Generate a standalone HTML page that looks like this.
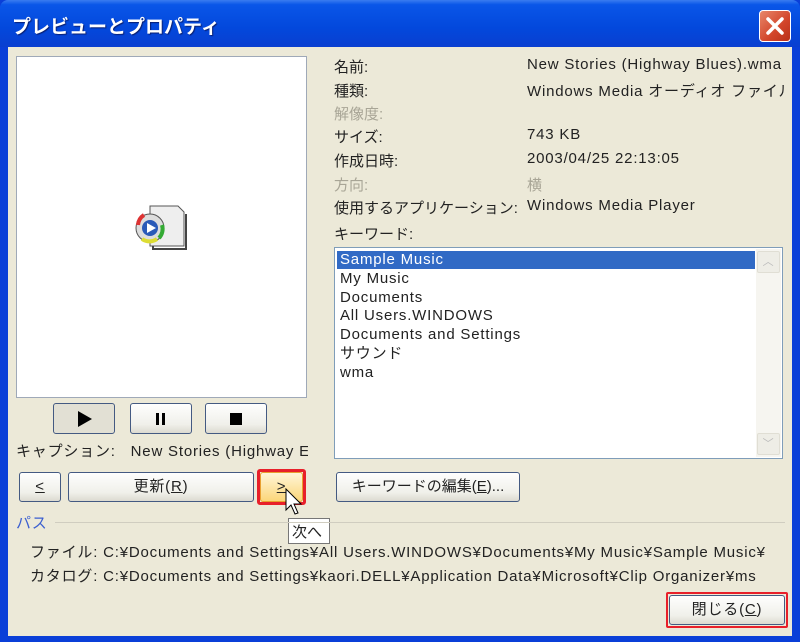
<!DOCTYPE html>
<html><head><meta charset="utf-8"><style>
*{margin:0;padding:0;box-sizing:border-box}
body{width:800px;height:642px;overflow:hidden;background:#0a3fd8;font-family:"Liberation Sans","Noto Sans CJK JP",sans-serif;font-size:15px;color:#222;position:relative;letter-spacing:0.8px}
.a{position:absolute;white-space:nowrap}
#title{left:0;top:0;width:800px;height:47px;background:linear-gradient(#3a7cf0 0,#0a56e8 10%,#0348dc 60%,#0a3fd0 100%);border-radius:8px 8px 0 0}
#tt{left:12px;top:12px;color:#fff;font-weight:bold;font-size:19px;text-shadow:1px 1px 1px #0a1f70;letter-spacing:0}
#close{left:759px;top:10px;width:32px;height:32px;background:linear-gradient(135deg,#e8876a,#d2452a 60%,#b8301a);border:1px solid #fff;border-radius:4px}
#bodyw{left:8px;top:47px;width:784px;height:589px;background:#ece9d8}
.box{background:#fff;border:1px solid #9fa9b8}
.btn{position:absolute;border:1px solid #445a82;border-radius:3px;background:linear-gradient(#fefefe,#f0f0ea 70%,#dcdad0);text-align:center;font-size:15px;line-height:28px}
.g{color:#a8a596}
.l{left:334px;letter-spacing:0}.v{left:527px}
.li{position:absolute;left:5px;font-size:15px;line-height:18px;height:18px}
</style></head><body>
<div class="a" id="title"></div>
<div class="a" id="tt">プレビューとプロパティ</div>
<div class="a" id="close"><svg width="30" height="30" viewBox="0 0 30 30"><path d="M8 8L22 22M22 8L8 22" stroke="#fff" stroke-width="3.5" stroke-linecap="round"/></svg></div>
<div class="a" id="bodyw"></div>

<div class="a box" style="left:16px;top:56px;width:291px;height:342px"></div>
<svg class="a" style="left:132px;top:203px" width="56" height="50" viewBox="0 0 56 50">
<path d="M18 3H46L52 9V43H18Z" fill="#eee" stroke="#555"/><path d="M21 43V46H54V11" fill="none" stroke="#444" stroke-width="2"/>
<circle cx="18" cy="25" r="14" fill="#ddd" stroke="#555"/>
<path d="M6 22A13 13 0 0 1 12 12" stroke="#d33" stroke-width="4" fill="none"/>
<path d="M30 22A13 13 0 0 1 27 35" stroke="#3a3" stroke-width="4" fill="none"/>
<path d="M25 36A13 13 0 0 1 10 36" stroke="#dd3" stroke-width="4" fill="none"/>
<circle cx="18" cy="25" r="8" fill="#2a5ab8"/><path d="M15 20L24 25L15 30Z" fill="#fff"/></svg>

<div class="btn" style="left:53px;top:403px;width:62px;height:31px;background:#e2e0d4"><svg width="20" height="20" viewBox="0 0 20 20" style="margin-top:5px"><path d="M4 2L18 10L4 18Z" fill="#000"/></svg></div>
<div class="btn" style="left:130px;top:403px;width:62px;height:31px"><svg width="20" height="20" viewBox="0 0 20 20" style="margin-top:5px"><rect x="5" y="4" width="3" height="12"/><rect x="11" y="4" width="3" height="12"/></svg></div>
<div class="btn" style="left:205px;top:403px;width:62px;height:31px"><svg width="20" height="20" viewBox="0 0 20 20" style="margin-top:5px"><rect x="4" y="4" width="12" height="12"/></svg></div>

<div class="a" style="left:16px;top:440px;width:292px;overflow:hidden">キャプション:&nbsp;&nbsp; New Stories (Highway E</div>

<div class="btn" style="left:19px;top:472px;width:42px;height:30px"><u>&lt;</u></div>
<div class="btn" style="left:68px;top:472px;width:186px;height:30px">更新(<u>R</u>)</div>
<div class="a" style="left:257px;top:469px;width:49px;height:36px;border:3px solid #e8202a;border-radius:3px"></div>
<div class="btn" style="left:260px;top:472px;width:43px;height:30px;background:linear-gradient(#fff6d8,#fbd67a);border-color:#e8a030"><u>&gt;</u></div>
<svg class="a" style="left:285px;top:488px" width="20" height="30" viewBox="0 0 20 30"><path d="M1 1V22L6 17L10 26L13 25L9 16H16Z" fill="#fff" stroke="#000"/></svg>
<div class="a" style="left:288px;top:518px;width:42px;height:26px;background:#fff;border:1px solid #777;font-size:15px;padding:2px 3px;letter-spacing:0">次へ</div>

<div class="a" style="left:16px;top:512px;color:#3b5fd0">パス</div>
<div class="a" style="left:55px;top:522px;width:730px;height:1px;background:#d0cdc0"></div>
<div class="a" style="left:30px;top:541px;width:755px;overflow:hidden">ファイル: C:¥Documents and Settings¥All Users.WINDOWS¥Documents¥My Music¥Sample Music¥</div>
<div class="a" style="left:30px;top:565px;width:755px;overflow:hidden">カタログ: C:¥Documents and Settings¥kaori.DELL¥Application Data¥Microsoft¥Clip Organizer¥ms</div>

<div class="a l" style="top:56px">名前:</div><div class="a v" style="top:56px;width:258px;overflow:hidden">New Stories (Highway Blues).wma</div>
<div class="a l" style="top:80px">種類:</div><div class="a v" style="top:80px;width:258px;overflow:hidden">Windows Media オーディオ ファイル</div>
<div class="a l g" style="top:103px">解像度:</div>
<div class="a l" style="top:126px">サイズ:</div><div class="a v" style="top:126px">743 KB</div>
<div class="a l" style="top:150px">作成日時:</div><div class="a v" style="top:150px">2003/04/25 22:13:05</div>
<div class="a l g" style="top:174px">方向:</div><div class="a v g" style="top:174px">横</div>
<div class="a l" style="top:197px">使用するアプリケーション:</div><div class="a v" style="top:197px">Windows Media Player</div>
<div class="a l" style="top:223px">キーワード:</div>

<div class="a box" style="left:334px;top:247px;width:449px;height:212px;border-color:#7f9db9">
<div class="a" style="left:2px;top:3px;width:418px;height:18px;background:#316ac5"></div>
<div class="li" style="top:3px;color:#fff">Sample Music</div>
<div class="li" style="top:22px">My Music</div>
<div class="li" style="top:41px">Documents</div>
<div class="li" style="top:59px">All Users.WINDOWS</div>
<div class="li" style="top:78px">Documents and Settings</div>
<div class="li" style="top:97px">サウンド</div>
<div class="li" style="top:116px">wma</div>
<div class="a" style="left:421px;top:1px;width:25px;height:208px;background:#f6f5f0"></div>
<div class="a" style="left:422px;top:3px;width:23px;height:22px;background:#eeede6;border:1px solid #e0ded4;border-radius:2px;color:#bbb;font-size:11px;text-align:center;line-height:20px">︿</div>
<div class="a" style="left:422px;top:185px;width:23px;height:22px;background:#eeede6;border:1px solid #e0ded4;border-radius:2px;color:#bbb;font-size:11px;text-align:center;line-height:20px">﹀</div>
</div>

<div class="btn" style="left:336px;top:472px;width:184px;height:30px;letter-spacing:0">キーワードの編集(<u>E</u>)...</div>

<div class="a" style="left:666px;top:592px;width:122px;height:36px;border:2px solid #e8202a;border-radius:2px"></div>
<div class="btn" style="left:669px;top:595px;width:116px;height:30px">閉じる(<u>C</u>)</div>
</body></html>
